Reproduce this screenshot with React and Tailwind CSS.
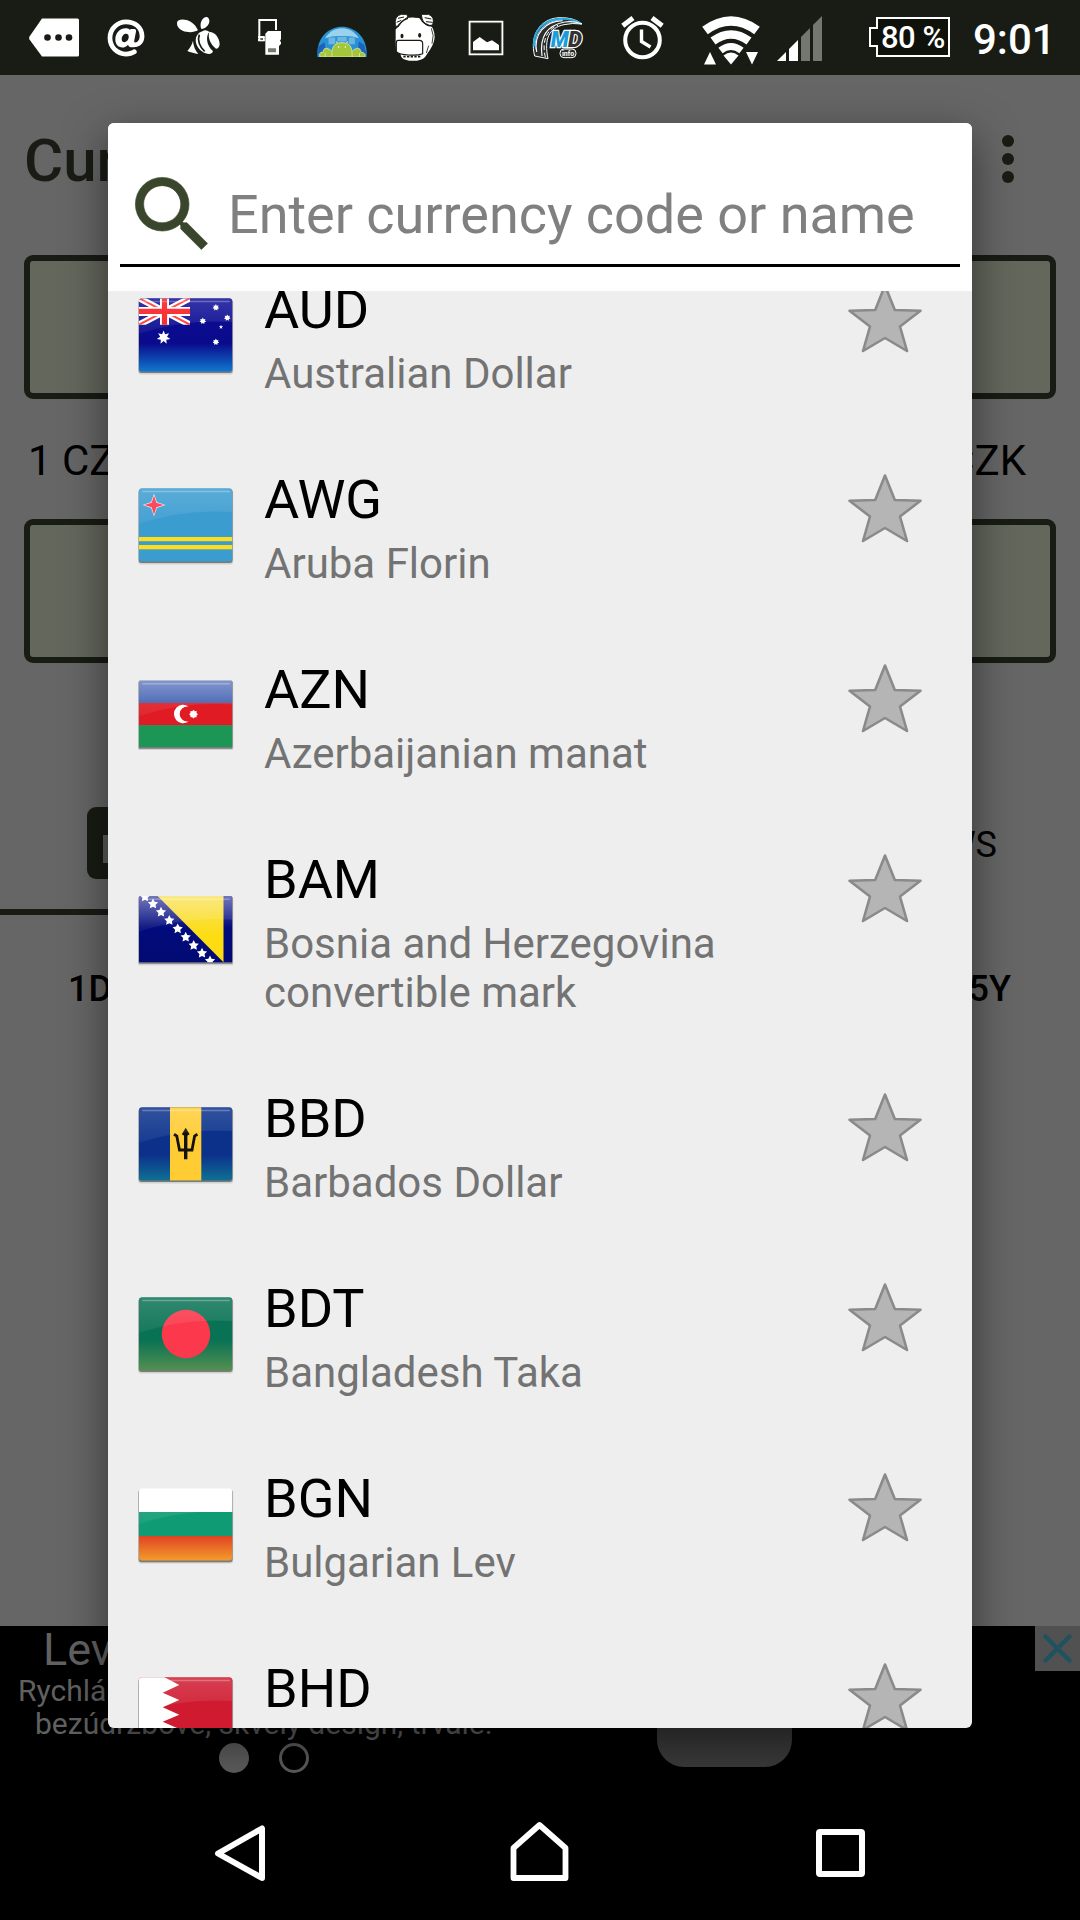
import React from "react";
import { FaAt } from "react-icons/fa";

/* ---------- status bar icons ---------- */

const MoreTag = () => (
  <svg className="ml-[29px] mt-[18px] h-[40px] w-[50px]" viewBox="0 0 50 40">
    <path d="M13 .5H48.500Q50 .5 50 2V37Q50 38.500 48.500 38.500H13L.5 21.500Q-.2 20 .5 18.500Z" fill="#fff" />
    <circle cx="18.500" cy="19.500" r="3.300" fill="#181c14" />
    <circle cx="29.500" cy="19.500" r="3.300" fill="#181c14" />
    <circle cx="40" cy="19.500" r="3.300" fill="#181c14" />
  </svg>
);

const Bee = () => (
  <svg className="ml-[31px] mt-[16px] h-[40px] w-[44px]" viewBox="0 0 132 120" fill="#fff">
    <path d="M3 20C4 8 28 8 44 17C56 24 62 34 66 43C54 50 34 50 20 44C8 38 2 30 3 20Z" />
    <path d="M76 39C71 28 74 12 84 5C94-1 101 6 100 17C99 28 88 37 76 39Z" />
    <path d="M79 46C86 40 94 42 100 48C88 60 92 90 110 104C112 108 108 113 100 114C70 112 52 80 62 60C66 52 72 48 79 46Z" />
    <path d="M100 47C118 48 130 66 131 84C130 94 126 98 120 98C104 86 94 64 100 47Z" />
    <path d="M51 74C52 90 58 104 67 114C56 113 44 109 34 105C42 96 48 86 51 74Z" />
    <path d="M70 56C64 72 70 92 86 106" fill="none" stroke="#181c14" strokeWidth="5" />
  </svg>
);

const PhoneCard = () => (
  <svg className="ml-[38px] mt-[18px] h-[40px] w-[25px]" viewBox="0 0 75 120">
    <path d="M4 58V6H54V36M0 57H20M0 66H20" fill="none" stroke="#fff" strokeWidth="6" />
    <rect x="1" y="56" width="19" height="14" fill="#fff" />
    <rect x="7" y="61" width="8" height="4" fill="#181c14" />
    <path d="M30 39H69V63L66 68L69 73V78L63 84V110H22V47Z" fill="#fff" />
    <path d="M33 91V103M39 91V103M45 91V103M51 91V103" stroke="#181c14" strokeWidth="3.500" />
  </svg>
);

const GlobeDroids = () => (
  <svg className="ml-[34px] mt-[26px] h-[31px] w-[50px]" viewBox="0 0 148 92">
    <path d="M1 92V74C4 30 38 2 74 2S144 30 147 74V92Z" fill="#2a92d4" />
    <path d="M24 36C36 18 52 7 74 7S112 18 124 36Q100 28 74 30Q48 28 24 36Z" fill="#9ad2ec" />
    <path d="M34 34H54V54H34ZM60 32H88V46H60ZM94 34H112V54H94Z" fill="#8cc6e6" opacity=".7" />
    <path d="M4 60L22 48L28 82H2ZM124 46L140 56L146 82H120Z" fill="#1a64b8" />
    <path d="M8 92V82Q10 76 18 78Q18 66 28 66Q40 68 44 76Q46 56 60 52L57 46L62 51Q74 47 86 51L91 46L88 52Q102 56 104 76Q108 68 120 66Q130 66 130 78Q138 76 142 84V92Z" fill="#a4c639" stroke="#e8f3c4" strokeWidth="2" />
    <path d="M44 78V92M104 78V92M24 80V92M126 80V92" stroke="#e8f3c4" strokeWidth="2" />
    <circle cx="64" cy="62" r="2.200" fill="#fff" />
    <circle cx="84" cy="62" r="2.200" fill="#fff" />
  </svg>
);

const Hippo = () => (
  <svg className="ml-[27px] mt-[13px] h-[49px] w-[43px]" viewBox="0 0 129 147">
    <path d="M5 84V50C14 20 34 12 62 14C98 14 122 38 122 72C120 98 106 112 96 128C88 142 66 145 46 143C28 141 20 134 20 124L6 110Z" fill="#fff" />
    <path d="M4 38Q0 8 22 4H38L42 12Q24 20 12 42ZM82 4H104Q124 12 116 36L104 38Q90 36 84 16Z" fill="#fff" stroke="#181c14" strokeWidth="3" />
    <path d="M12 16L30 12M8 28L22 22M92 14L112 18M96 26L116 28" stroke="#181c14" strokeWidth="3" />
    <path d="M6 46Q22 22 42 16M78 14Q90 38 118 40" stroke="#181c14" strokeWidth="4" fill="none" />
    <ellipse cx="24" cy="69" rx="4.500" ry="7" fill="#181c14" />
    <ellipse cx="77" cy="67" rx="4.500" ry="7" fill="#181c14" />
    <path d="M12 82H76Q86 82 86 92V122Q72 128 44 126Q16 125 7 116V90Q7 82 12 82Z" fill="#fff" stroke="#181c14" strokeWidth="3.500" />
    <path d="M28 131H80" stroke="#181c14" strokeWidth="5" strokeDasharray="7 4" />
    <path d="M104 98L97 120M112 46Q122 66 114 92" stroke="#181c14" strokeWidth="2.500" fill="none" />
  </svg>
);

const Picture = () => (
  <svg className="ml-[31px] mt-[20px] h-[36px] w-[36px]" viewBox="0 0 108 108">
    <path d="M5 5H103V103H5Z" fill="none" stroke="#fff" strokeWidth="6" />
    <path d="M8 8H100V100H8Z" fill="none" stroke="#77796f" strokeWidth="2" />
    <path d="M15 91V66L35 51L57 67L72 61L93 75V91Z" fill="#fff" />
  </svg>
);

const MdInfo = () => (
  <svg className="ml-[28px] mt-[16px] h-[44px] w-[52px]" viewBox="0 0 156 132">
    <path d="M8 120C-8 60 24 6 84 5Q126 4 150 24Q120 20 96 26C50 36 36 70 48 128Z" fill="#2a2d2b" stroke="#fff" strokeWidth="3" />
    <path d="M6 92C2 44 36 8 90 8Q124 8 146 22" fill="none" stroke="#29abe2" strokeWidth="6" />
    <path d="M14 108C4 54 38 16 92 14M30 120C22 62 46 28 98 18Q124 14 148 24" fill="none" stroke="#fff" strokeWidth="3.500" />
    <path d="M11 100C4 50 38 12 92 12" fill="none" stroke="#7fd0f0" strokeWidth="3" />
    <path d="M40 124C28 72 46 40 78 28" fill="none" stroke="#fff" strokeWidth="3" strokeDasharray="14 8" />
    <text x="56" y="92" fontFamily="Roboto, sans-serif" fontSize="66" fontWeight="900" fontStyle="italic" stroke="#fff" strokeWidth="7" paintOrder="stroke">
      <tspan fill="#1b9ddb" textLength="54" lengthAdjust="spacingAndGlyphs">M</tspan>
      <tspan x="108" fill="#333" textLength="42" lengthAdjust="spacingAndGlyphs">D</tspan>
    </text>
    <rect x="84" y="99" width="48" height="26" rx="12" fill="#2a2d2b" stroke="#fff" strokeWidth="3" />
    <text x="108" y="119" textAnchor="middle" fontFamily="Roboto, sans-serif" fontSize="21" fontWeight="700" fill="#fff">info</text>
  </svg>
);

const Alarm = () => (
  <svg className="ml-[37px] mt-[16px] h-[44px] w-[43px]" viewBox="0 0 43 44" fill="none" stroke="#fff">
    <circle cx="21.500" cy="24" r="17.300" strokeWidth="4" />
    <path d="M1.800 9.700L12 2M31 2L41.200 9.700" strokeWidth="5" />
    <path d="M20.500 13.500V25.500L29.500 31" strokeWidth="3.400" />
  </svg>
);

const Wifi = () => (
  <svg className="ml-[37px] mt-[15px] h-[50px] w-[60px]" viewBox="0 0 60 50">
    <g fill="none" stroke="#fff">
      <path d="M4 15.500Q30-3.500 56 15.500" strokeWidth="9.500" />
      <path d="M12 26Q30 13 48 26" strokeWidth="8.500" />
      <path d="M19.500 35.500Q30 27.500 40.500 35.500" strokeWidth="7" />
    </g>
    <path d="M22.500 40.500Q30 34.500 37.500 40.500L30 49.500Z" fill="#fff" />
    <path d="M9 37L15 49.500H3Z" fill="#fff" />
    <path d="M45 37H57L51 49.500Z" fill="#fff" />
  </svg>
);

const Signal = () => (
  <svg className="ml-[16px] mt-[16px] h-[45px] w-[45px]" viewBox="0 0 45 45">
    <path d="M0 45L9 36V45Z" fill="#fff" />
    <path d="M12 33L21 24V45H12Z" fill="#fff" />
    <path d="M24 21L33 12V45H24Z" fill="#74776f" />
    <path d="M36 9L45 0V45H36Z" fill="#74776f" />
  </svg>
);

const Battery = () => (
  <div className="relative ml-[46px] mt-[17px] h-[40px] w-[82px]">
    <svg className="absolute inset-0" width="82" height="40" viewBox="0 0 82 40">
      <path d="M9 1H81V39H9V29H2V11H9Z" fill="#0e120b" stroke="#fff" strokeWidth="2" />
    </svg>
    <span className="absolute left-[13px] top-[3px] whitespace-nowrap text-[31px] font-medium leading-[36px] tracking-[-0.5px] text-white">
      80 %
    </span>
  </div>
);

const StatusBar = () => (
  <div className="flex h-[75px] items-start bg-[#181c14] text-white">
    <MoreTag />
    <FaAt className="ml-[28px] mt-[19px]" size={38} />
    <Bee />
    <PhoneCard />
    <GlobeDroids />
    <Hippo />
    <Picture />
    <MdInfo />
    <Alarm />
    <Wifi />
    <Signal />
    <Battery />
    <span className="ml-[23px] mt-[15px] text-[42px] font-medium leading-[49px]">9:01</span>
  </div>
);

/* ---------- flags ---------- */

const starPoints = (cx, cy, r, n = 5, inner = 0.42) =>
  Array.from({ length: n * 2 }, (_, i) => {
    const a = (Math.PI * i) / n - Math.PI / 2;
    const d = i % 2 ? r * inner : r;
    return `${cx + d * Math.cos(a)},${cy + d * Math.sin(a)}`;
  }).join(" ");

const Flag = ({ id, y = 8.2, h = 73.3, round = 3, children }) => (
  <svg className="h-24 w-24 shrink-0" viewBox="0 0 96 96">
    <defs>
      <clipPath id={`clip-${id}`}>
        <rect x="1" y={y} width="93.200" height={h} rx={round} />
      </clipPath>
      <linearGradient id={`gloss-${id}`} x1="0" y1="0" x2="0" y2="1">
        <stop offset="0" stopColor="#fff" stopOpacity=".16" />
        <stop offset="1" stopColor="#fff" stopOpacity=".05" />
      </linearGradient>
    </defs>
    <rect x="0.600" y={y + 0.8} width="94" height={h + 0.8} rx={round} fill="#555" opacity=".75" />
    <rect x="0.200" y={y + 2} width="95" height={h + 1} rx={round} fill="#777" opacity=".25" />
    <g clipPath={`url(#clip-${id})`}>
      {children}
      <path d={`M0 ${y}H96V${y + 24}Q48 ${y + 20} 0 ${y + 36}Z`} fill={`url(#gloss-${id})`} />
      <rect x="4" y={y + 2.500} width="88" height="1.500" rx="1" fill="#fff" opacity=".28" />
    </g>
  </svg>
);

const FlagAUD = () => (
  <Flag id="aud">
    <linearGradient id="aud-bg" x1="0" y1="0" x2="0" y2="1">
      <stop offset=".1" stopColor="#0e0e98" />
      <stop offset=".62" stopColor="#0a0a8c" />
      <stop offset="1" stopColor="#1089d8" />
    </linearGradient>
    <rect width="96" height="86" fill="url(#aud-bg)" />
    <svg x="1" y="8.200" width="51" height="26.500" viewBox="0 0 51 26.500">
      <path d="M0 0L51 26.500M51 0L0 26.500" stroke="#fff" strokeWidth="6.500" />
      <path d="M0 0L51 26.500M51 0L0 26.500" stroke="#f33" strokeWidth="2" />
      <path d="M25.500 0V27M0 13.200H51" stroke="#fff" strokeWidth="9" />
      <path d="M25.500 0V27M0 13.200H51" stroke="#f81a1e" strokeWidth="5.200" />
    </svg>
    <g fill="#fff">
      <polygon points={starPoints(25.6, 47.5, 7, 7, 0.5)} />
      <polygon points={starPoints(77.9, 17.5, 3.4, 7, 0.6)} />
      <polygon points={starPoints(64.8, 31, 3.4, 7, 0.6)} />
      <polygon points={starPoints(89.3, 27.8, 3.4, 7, 0.6)} />
      <polygon points={starPoints(83, 37, 2.2)} />
      <polygon points={starPoints(77.9, 52, 3.4, 7, 0.6)} />
    </g>
  </Flag>
);

const FlagAWG = () => (
  <Flag id="awg">
    <rect width="96" height="86" fill="#3b9cd0" />
    <rect y="57" width="96" height="4.200" fill="#ffdc1c" />
    <rect y="65" width="96" height="4.300" fill="#ffdc1c" />
    <polygon points={starPoints(16, 25, 11.500, 4, 0.36)} fill="#f5d5dc" />
    <polygon points={starPoints(16, 25, 9.500, 4, 0.34)} fill="#f8354c" />
  </Flag>
);

const FlagAZN = () => (
  <Flag id="azn" y={10.5} h={66.6} round={1}>
    <linearGradient id="azn-top" x1="0" y1="0" x2="0" y2="1">
      <stop offset=".3" stopColor="#6c82c4" />
      <stop offset="1" stopColor="#4060ae" />
    </linearGradient>
    <rect width="96" height="33" fill="url(#azn-top)" />
    <rect y="33" width="96" height="22.300" fill="#e01b24" />
    <rect y="55.300" width="96" height="30" fill="#1b9655" />
    <path d="M50.500 36.500A9.200 9.200 0 1 0 50.500 51.500A7.600 7.600 0 1 1 50.500 36.500Z" fill="#fff" />
    <polygon points={starPoints(55.5, 44.2, 4.4, 8, 0.75)} fill="#fff" />
  </Flag>
);

const bamStars = [
  [7, 12], [15, 19], [23, 27.2], [31.3, 35.5], [39.7, 43.8],
  [47.7, 52.2], [55.7, 60.5], [64, 68.2], [72, 76],
];

const FlagBAM = () => (
  <Flag id="bam" y={10.9} h={66.3} round={1}>
    <linearGradient id="bam-bg" x1="0" y1="0" x2="0" y2="1">
      <stop offset=".1" stopColor="#5c62b0" />
      <stop offset=".5" stopColor="#020b7c" />
      <stop offset="1" stopColor="#020a70" />
    </linearGradient>
    <linearGradient id="bam-tri" x1="0" y1="0" x2="0" y2="1">
      <stop offset="0" stopColor="#f8e468" />
      <stop offset=".6" stopColor="#fddc12" />
    </linearGradient>
    <rect width="96" height="86" fill="url(#bam-bg)" />
    <path d="M19.500 10.900H85.500V77.200Z" fill="url(#bam-tri)" />
    {bamStars.map(([x, y]) => (
      <polygon key={x} points={starPoints(x, y, 5.4, 5, 0.5)} fill="#fff" />
    ))}
  </Flag>
);

const FlagBBD = () => (
  <Flag id="bbd">
    <linearGradient id="bbd-bg" x1="0" y1="0" x2="0" y2="1">
      <stop offset=".65" stopColor="#0b318b" />
      <stop offset="1" stopColor="#107b94" />
    </linearGradient>
    <rect width="96" height="86" fill="url(#bbd-bg)" />
    <rect x="32" width="31.300" height="86" fill="#ffcc33" />
    <g fill="none" stroke="#14120a" strokeWidth="2.800">
      <path d="M47.700 33V60.300" strokeWidth="3.400" />
      <path d="M36 35.300L38.800 37L41.500 51H54L56.600 37L59.400 35.300" />
      <path d="M45 36L47.700 31.500L50.400 36" />
    </g>
  </Flag>
);

const FlagBDT = () => (
  <Flag id="bdt">
    <linearGradient id="bdt-bg" x1="0" y1="0" x2="0" y2="1">
      <stop offset=".6" stopColor="#0a7254" />
      <stop offset="1" stopColor="#5f9450" />
    </linearGradient>
    <rect width="96" height="86" fill="url(#bdt-bg)" />
    <circle cx="48" cy="45" r="24.200" fill="#fb384c" />
  </Flag>
);

const FlagBGN = () => (
  <Flag id="bgn" y={9.4} h={72.2}>
    <linearGradient id="bgn-bg" x1="0" y1="0" x2="0" y2="1">
      <stop offset="0" stopColor="#e04322" />
      <stop offset=".95" stopColor="#f3a02c" />
    </linearGradient>
    <rect width="96" height="33" fill="#fff" />
    <rect y="33" width="96" height="24" fill="#0f9c74" />
    <rect y="57" width="96" height="27" fill="url(#bgn-bg)" />
  </Flag>
);

const FlagBHD = () => (
  <Flag id="bhd">
    <rect width="96" height="86" fill="#cf1a30" />
    <path d="M0 8H26L41.300 16L24.700 23.700L41.300 31L24.700 38.300L41.300 45.700L24.700 52.700L41.300 60L24.700 67.500L41.300 75L26 83H0Z" fill="#fff" />
  </Flag>
);

const Star = () => (
  <svg className="ml-auto mr-[48px] mt-[3px] h-[75px] w-[78px] shrink-0" viewBox="0 0 78 75">
    <path
      d="M39 4.500L48.800 29L74.500 29.800L54 45.500L61 70L39 57L17 70L24 45.500L3.500 29.800L29.200 29Z"
      fill="#b5b5b5"
      stroke="#8a8a8a"
      strokeWidth="2.600"
      strokeLinejoin="round"
    />
  </svg>
);

const currencies = [
  { code: "AUD", name: "Australian Dollar", flag: <FlagAUD /> },
  { code: "AWG", name: "Aruba Florin", flag: <FlagAWG /> },
  { code: "AZN", name: "Azerbaijanian manat", flag: <FlagAZN /> },
  { code: "BAM", name: "Bosnia and Herzegovina convertible mark", flag: <FlagBAM /> },
  { code: "BBD", name: "Barbados Dollar", flag: <FlagBBD /> },
  { code: "BDT", name: "Bangladesh Taka", flag: <FlagBDT /> },
  { code: "BGN", name: "Bulgarian Lev", flag: <FlagBGN /> },
  { code: "BHD", name: "", flag: <FlagBHD /> },
];

const CurrencyDialog = () => (
  <div className="absolute left-[108px] top-[123px] flex h-[1605px] w-[864px] flex-col overflow-hidden rounded-[6px] bg-[#eee] shadow-[0_14px_44px_rgba(0,0,0,0.5)]">
    <div className="h-[168px] shrink-0 bg-white px-3">
      <div className="flex h-[144px] border-b-[3px] border-black">
        <svg
          className="ml-[3px] mt-[42px] h-[99px] w-[99px] shrink-0"
          viewBox="0 0 24 24"
          fill="#3a462c"
          stroke="#3a462c"
          strokeWidth=".15"
        >
          <path d="M15.500 14h-.79l-.28-.27A6.471 6.471 0 0 0 16 9.500 6.500 6.500 0 1 0 9.500 16c1.610 0 3.090-.59 4.230-1.570l.27.28v.79l5 4.990L20.490 19l-4.990-5zm-6 0C7.010 14 5 11.990 5 9.500S7.010 5 9.500 5 14 7.010 14 9.500 11.990 14 9.500 14z" />
        </svg>
        <span className="ml-[6px] mt-[60px] whitespace-nowrap text-[54px] leading-[63px] tracking-[-0.03px] text-[#808080]">
          Enter currency code or name
        </span>
      </div>
    </div>
    <div className="min-h-0 flex-1 overflow-hidden">
      <div className="-mt-12 flex flex-col">
        {currencies.map((c) => (
          <div key={c.code} className="flex py-[35px] pl-[30px]">
            <div className="flex items-center">{c.flag}</div>
            <div className="ml-[30px] flex w-[500px] flex-col gap-2">
              <span className="text-[54px] leading-[63px] text-black">{c.code}</span>
              <span className="min-h-[49px] text-[42px] leading-[49px] text-[#737373]">{c.name}</span>
            </div>
            <Star />
          </div>
        ))}
      </div>
    </div>
  </div>
);

/* ---------- dimmed screen under the dialog ---------- */

const AmountField = () => (
  <div className="mx-6 h-36 rounded-[9px] border-[6px] border-[#181c14] bg-[#64675c]" />
);

const Converter = () => (
  <div className="flex h-[1551px] flex-col bg-[#666]">
    <div className="flex h-[180px] items-start justify-between pl-[24px] pr-[66px]">
      <span className="mt-[51px] text-[60px] font-medium leading-[70px] text-[#181c14]">Cur</span>
      <div className="mt-[60px] flex flex-col gap-[6px]">
        <span className="size-3 rounded-full bg-[#181c14]" />
        <span className="size-3 rounded-full bg-[#181c14]" />
        <span className="size-3 rounded-full bg-[#181c14]" />
      </div>
    </div>
    <AmountField />
    <div className="flex h-[120px] items-start justify-between pl-[28px] pr-[54px] pt-[37px] text-[42px] leading-[49px] text-black">
      <span>1 CZ</span>
      <span>CZK</span>
    </div>
    <AmountField />
    <div className="mt-[144px] flex h-[108px] items-start justify-between pl-[87px] pr-[83px]">
      <div className="flex h-[72px] w-[200px] items-center rounded-[9px] bg-[#181c14] pl-4">
        <span className="mt-[12px] h-7 w-10 bg-[#5c5c5c]" />
      </div>
      <span className="mt-[17px] text-[36px] leading-[42px] text-black">NEWS</span>
    </div>
    <div className="-mt-[6px] h-[6px] w-[540px] bg-[#181c14]" />
    <div className="mt-[53px] flex justify-between pl-[68px] pr-[69px] text-[36px] font-medium leading-[42px] text-black">
      <span>1D</span>
      <span>5Y</span>
    </div>
  </div>
);

const AdBanner = () => (
  <div className="flex h-[150px] justify-between text-[#616161]">
    <div className="flex w-[540px] flex-col">
      <span className="mt-[-3px] h-[53px] pl-[43px] text-[45px] leading-[53px]">Lev</span>
      <span className="-mt-[2px] h-[33px] whitespace-nowrap pl-[18px] text-[30px] leading-[33px]">Rychlá</span>
      <span className="h-[33px] whitespace-nowrap pl-[35px] text-[30px] leading-[33px]">
        bezúdržbové, skvělý design, trvalé.
      </span>
      <div className="ml-[219px] mt-[3px] flex gap-[30px]">
        <span className="size-[30px] rounded-full bg-[#5b5b5b]" />
        <span className="size-[30px] rounded-full border-[3px] border-[#5b5b5b]" />
      </div>
    </div>
    <div className="ml-[117px] h-[141px] w-[135px] rounded-[27px] bg-[#3a3a3a]" />
    <div className="ml-auto flex size-[45px] items-center justify-center bg-[#515151]">
      <svg width="31" height="31" viewBox="0 0 31 31">
        <path d="M3.500 3.500L27.500 27.500M27.500 3.500L3.500 27.500" stroke="#1f525e" strokeWidth="4.500" strokeLinecap="round" />
      </svg>
    </div>
  </div>
);

const NavBar = () => (
  <div className="flex h-[144px] items-start">
    <svg className="ml-[214px] mt-[48px] h-[60px] w-[52px]" viewBox="0 0 52 60">
      <path d="M48 4.500V54L4 29.500Z" fill="none" stroke="#fff" strokeWidth="6" strokeLinejoin="round" />
    </svg>
    <svg className="ml-[243px] mt-[44px] h-[64px] w-[60px]" viewBox="0 0 60 64">
      <path d="M4.500 28V58H56.500V28L30.500 5Z" fill="none" stroke="#fff" strokeWidth="5.800" strokeLinejoin="round" />
    </svg>
    <div className="ml-[247px] mt-[53px] h-[48px] w-[49px] rounded-[4px] border-[6px] border-white" />
  </div>
);

const App = () => {
  return (
    <div className="relative h-[1920px] w-[1080px] overflow-hidden bg-black font-['Roboto',sans-serif]">
      <StatusBar />
      <Converter />
      <AdBanner />
      <NavBar />
      <CurrencyDialog />
    </div>
  );
};

export default App;
